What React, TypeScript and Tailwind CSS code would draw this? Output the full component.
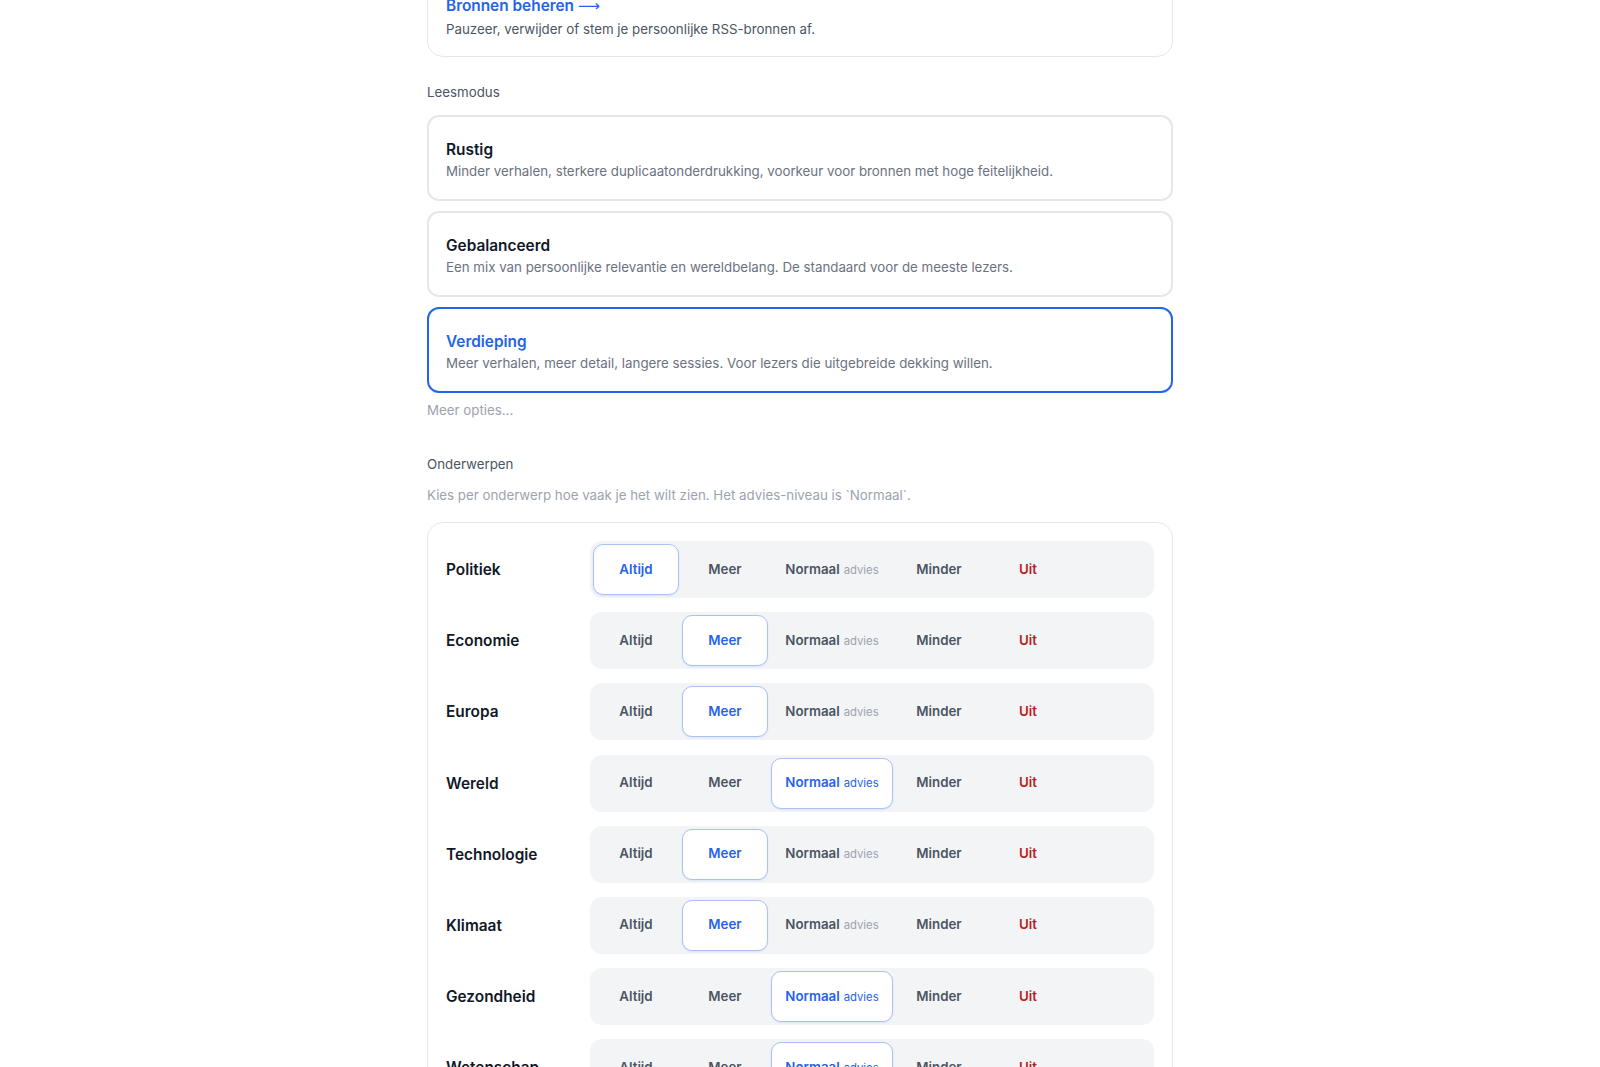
import React, { useState } from 'react';

type Level = 'Altijd' | 'Meer' | 'Normaal' | 'Minder' | 'Uit';

const levels: Level[] = ['Altijd', 'Meer', 'Normaal', 'Minder', 'Uit'];

const modes = [
  {
    id: 'rustig',
    title: 'Rustig',
    desc: 'Minder verhalen, sterkere duplicaatonderdrukking, voorkeur voor bronnen met hoge feitelijkheid.',
  },
  {
    id: 'gebalanceerd',
    title: 'Gebalanceerd',
    desc: 'Een mix van persoonlijke relevantie en wereldbelang. De standaard voor de meeste lezers.',
  },
  {
    id: 'verdieping',
    title: 'Verdieping',
    desc: 'Meer verhalen, meer detail, langere sessies. Voor lezers die uitgebreide dekking willen.',
  },
];

const initialTopics: { name: string; level: Level }[] = [
  { name: 'Politiek', level: 'Altijd' },
  { name: 'Economie', level: 'Meer' },
  { name: 'Europa', level: 'Meer' },
  { name: 'Wereld', level: 'Normaal' },
  { name: 'Technologie', level: 'Meer' },
  { name: 'Klimaat', level: 'Meer' },
  { name: 'Gezondheid', level: 'Normaal' },
  { name: 'Wetenschap', level: 'Normaal' },
  { name: 'Cultuur', level: 'Normaal' },
  { name: 'Sport', level: 'Minder' },
];

const LevelPicker: React.FC<{ value: Level; onChange: (l: Level) => void }> = ({ value, onChange }) => {
  return (
    <div className="flex flex-1 items-center gap-[3px] rounded-xl bg-[#f3f4f6] p-[3px]">
      {levels.map((l) => {
        const active = l === value;
        const width = l === 'Normaal' ? 'w-[122px]' : 'w-[86px]';
        let color = active ? 'text-[#2563eb]' : 'text-[#4b5563]';
        if (l === 'Uit') color = 'text-[#b91c1c]';
        return (
          <button
            key={l}
            type="button"
            onClick={() => onChange(l)}
            className={`${width} flex h-[51px] items-center justify-center rounded-[10px] border text-[13.3px] font-semibold ${color} ${
              active ? 'border-[#a9c1f3] bg-white shadow-[0_1px_2px_rgba(37,99,235,0.12)]' : 'border-transparent'
            }`}
          >
            <span className="inline-flex items-baseline gap-1">
              {l}
              {l === 'Normaal' && (
                <span className={`text-[11.3px] font-normal ${active ? 'text-[#2563eb]' : 'text-[#9ca3af]'}`}>advies</span>
              )}
            </span>
          </button>
        );
      })}
    </div>
  );
};

export default function App() {
  const [mode, setMode] = useState('verdieping');
  const [topics, setTopics] = useState(initialTopics);

  const setLevel = (name: string, level: Level) => {
    setTopics((prev) => prev.map((t) => (t.name === name ? { ...t, level } : t)));
  };

  return (
    <div className="min-h-screen bg-white font-['Inter','Noto_Sans',sans-serif] text-[#111827]">
      <div className="mx-auto w-[746px] pb-10">
        <div className="-mt-[25px] rounded-2xl border border-[#e5e7eb] bg-white px-[18px] pt-[18px] pb-[16px]">
          <a href="#" className="block text-[15.4px] leading-[23px] font-semibold text-[#2563eb]">
            Bronnen beheren <span className="font-['DejaVu_Sans',sans-serif] font-normal">⟶</span>
          </a>
          <p className="mt-px text-[13.3px] leading-[20.5px] text-[#4b5563]">
            Pauzeer, verwijder of stem je persoonlijke RSS-bronnen af.
          </p>
        </div>

        <div className="mt-[25px] text-[13.3px] leading-[20.5px] text-[#4b5563]">Leesmodus</div>

        <div className="mt-[13px] flex flex-col gap-[10px]">
          {modes.map((m) => {
            const active = m.id === mode;
            return (
              <button
                key={m.id}
                type="button"
                onClick={() => setMode(m.id)}
                className={`h-[86px] rounded-xl border-2 bg-white px-[17px] pt-[21px] pb-[17px] text-left ${
                  active ? 'border-[#2563eb]' : 'border-[#e5e7eb]'
                }`}
              >
                <div className={`text-[15.4px] leading-[22.5px] font-semibold ${active ? 'text-[#2563eb]' : 'text-[#111827]'}`}>
                  {m.title}
                </div>
                <div className="text-[13.3px] leading-[20.5px] text-[#6b7280]">{m.desc}</div>
              </button>
            );
          })}
        </div>

        <div className="mt-[7px] text-[13.3px] leading-[20.5px] text-[#9ca3af]">Meer opties...</div>

        <div className="mt-[33px] text-[13.3px] leading-[20.5px] text-[#4b5563]">Onderwerpen</div>
        <div className="mt-[11px] text-[13.3px] leading-[20.5px] text-[#9ca3af]">
          Kies per onderwerp hoe vaak je het wilt zien. Het advies-niveau is `Normaal`.
        </div>

        <div className="mt-[16.5px] flex flex-col gap-[14.2px] rounded-2xl border border-[#e5e7eb] bg-white p-[18px]">
          {topics.map((t) => (
            <div key={t.name} className="flex items-center">
              <div className="w-[144px] shrink-0 text-[15.4px] font-semibold text-[#111827]">{t.name}</div>
              <LevelPicker value={t.level} onChange={(l) => setLevel(t.name, l)} />
            </div>
          ))}
        </div>
      </div>
    </div>
  );
}
